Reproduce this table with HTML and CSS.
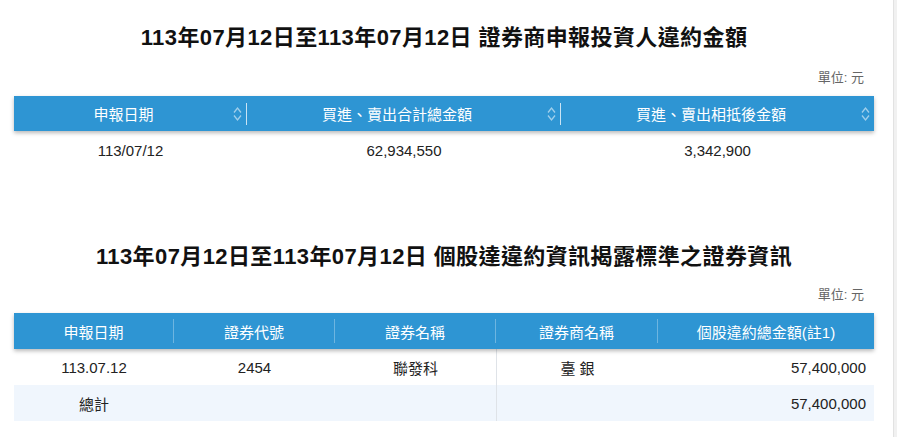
FILE: index.html
```html
<!DOCTYPE html>
<html lang="zh-Hant">
<head>
<meta charset="utf-8">
<title>證券商申報投資人違約金額</title>
<link rel="stylesheet" href="styles.css">
</head>
<body>
<main class="page">
  <section class="block block-first">
    <h2 class="title">113年07月12日至113年07月12日 證券商申報投資人違約金額</h2>
    <div class="unit">單位: 元</div>
    <div class="grid grid-a head">
      <div class="th"><span class="label">申報日期</span><svg class="sort" viewBox="0 0 9 16" width="9" height="16"><path d="M1 6.5 4.5 2 8 6.5M1 9.5 4.5 14 8 9.5"/></svg><span class="sep"></span></div>
      <div class="th"><span class="label">買進、賣出合計總金額</span><svg class="sort" viewBox="0 0 9 16" width="9" height="16"><path d="M1 6.5 4.5 2 8 6.5M1 9.5 4.5 14 8 9.5"/></svg><span class="sep"></span></div>
      <div class="th"><span class="label">買進、賣出相抵後金額</span><svg class="sort" viewBox="0 0 9 16" width="9" height="16"><path d="M1 6.5 4.5 2 8 6.5M1 9.5 4.5 14 8 9.5"/></svg></div>
    </div>
    <div class="grid grid-a row row-a">
      <div class="td">113/07/12</div>
      <div class="td">62,934,550</div>
      <div class="td">3,342,900</div>
    </div>
  </section>

  <section class="block block-second">
    <h2 class="title">113年07月12日至113年07月12日 個股達違約資訊揭露標準之證券資訊</h2>
    <div class="unit">單位: 元</div>
    <div class="grid grid-b head head-b">
      <div class="th"><span class="label">申報日期</span><span class="sep sep-faint"></span></div>
      <div class="th"><span class="label">證券代號</span><span class="sep sep-faint"></span></div>
      <div class="th"><span class="label">證券名稱</span><span class="sep sep-faint"></span></div>
      <div class="th"><span class="label">證券商名稱</span><span class="sep sep-faint"></span></div>
      <div class="th"><span class="label">個股違約總金額(註1)</span></div>
    </div>
    <div class="grid grid-b row">
      <div class="td">113.07.12</div>
      <div class="td">2454</div>
      <div class="td">聯發科</div>
      <div class="td line-left">臺 銀</div>
      <div class="td num">57,400,000</div>
    </div>
    <div class="grid grid-b row total">
      <div class="td">總計</div>
      <div class="td"></div>
      <div class="td"></div>
      <div class="td line-left"></div>
      <div class="td num">57,400,000</div>
    </div>
  </section>
</main>
<div class="scrollbar"></div>
</body>
</html>
```

FILE: styles.css
```css
html, body {
  margin: 0;
  padding: 0;
  background: #ffffff;
}

body {
  display: flex;
  height: 100vh;
  overflow: hidden;
  font-family: "Liberation Sans", Arial, "Noto Sans CJK TC", sans-serif;
  color: #222222;
}

.page {
  flex: 1;
  padding: 0 19px 0 14px;
}

.scrollbar {
  width: 3px;
  background: #f1f1f1;
  border-left: 1px solid #e2e2e2;
}

.block-first {
  padding-top: 23px;
}

.block-second {
  padding-top: 73px;
}

.title {
  margin: 0;
  text-align: center;
  font-size: 22px;
  line-height: 30px;
  font-weight: bold;
  color: #111111;
  letter-spacing: 0.4px;
}

.unit {
  text-align: right;
  font-size: 13px;
  line-height: 18px;
  color: #666666;
  padding-right: 10px;
}

.block-first .unit {
  margin-top: 16px;
  margin-bottom: 9px;
}

.block-second .unit {
  margin-top: 14px;
  margin-bottom: 9px;
}

.grid {
  display: grid;
}

.grid-a {
  grid-template-columns: 233px 314px 1fr;
}

.grid-b {
  grid-template-columns: 160px 161px 161px 162px 1fr;
}

.head {
  height: 35px;
  background: #2e95d3;
  color: #ffffff;
  box-shadow: 0 2px 4px rgba(0, 0, 0, 0.28);
  position: relative;
  z-index: 1;
}

.head-b {
  height: 36px;
}

.th {
  display: flex;
  align-items: center;
  font-size: 15px;
}

.label {
  flex: 1;
  text-align: center;
}

.sort {
  flex: none;
  margin-right: 4px;
}

.sort path {
  fill: none;
  stroke: rgba(255, 255, 255, 0.55);
  stroke-width: 1.3;
}

.sep {
  flex: none;
  width: 1px;
  height: 22px;
  background: rgba(255, 255, 255, 0.75);
}

.sep-faint {
  height: 24px;
  background: rgba(255, 255, 255, 0.3);
}

.row {
  height: 36px;
  font-size: 15px;
}

.row-a {
  height: 38px;
}

.td {
  display: flex;
  align-items: center;
  justify-content: center;
}

.td.num {
  justify-content: flex-end;
  padding-right: 8px;
}

.line-left {
  border-left: 1px solid #dfe3e8;
}

.total {
  background: #f0f6fd;
}
```
